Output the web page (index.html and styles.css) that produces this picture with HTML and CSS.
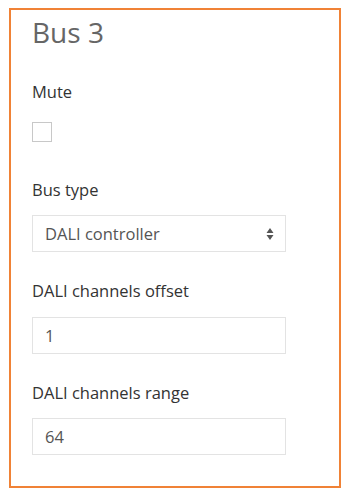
FILE: index.html
```html
<!DOCTYPE html>
<html>
<head>
<meta charset="utf-8">
<link rel="stylesheet" href="styles.css">
</head>
<body>
<div class="panel">
  <h1 class="title">Bus 3</h1>
  <div class="field f-mute">
    <div class="label">Mute</div>
    <div class="checkbox"></div>
  </div>
  <div class="field f-type">
    <div class="label">Bus type</div>
    <div class="control select c-type">
      <span>DALI controller</span>
      <svg class="arrows" width="8" height="14" viewBox="0 0 8 14"><path d="M4 1 L7.5 6 H0.5 Z M4 13 L7.5 8 H0.5 Z" fill="#555"/></svg>
    </div>
  </div>
  <div class="field f-offset">
    <div class="label">DALI channels offset</div>
    <div class="control c-offset">1</div>
  </div>
  <div class="field f-range">
    <div class="label">DALI channels range</div>
    <div class="control c-range">64</div>
  </div>
</div>
</body>
</html>
```
FILE: styles.css
```css
html, body {
  margin: 0;
  padding: 0;
  background: #ffffff;
}
body {
  font-family: "Open Sans", "Noto Sans", sans-serif;
  color: #333;
}
.panel {
  margin: 8px 0 0 9px;
  width: 332px;
  height: 480px;
  border: 2px solid #f08236;
  padding: 0 0 0 21px;
  box-sizing: border-box;
  display: flex;
  flex-direction: column;
}
.title {
  margin: 4px 0 0 0;
  font-size: 28px;
  font-weight: 400;
  line-height: 36px;
  color: #666;
}
.field {
  display: flex;
  flex-direction: column;
}
.label {
  font-size: 16.5px;
  line-height: 22px;
  color: #333;
}
.f-mute { margin-top: 31px; }
.f-type { margin-top: 37px; }
.f-offset { margin-top: 28px; }
.f-range { margin-top: 28px; }
.checkbox {
  margin-top: 19px;
  width: 18px;
  height: 18px;
  border: 1px solid #c8c8c8;
  background: #fff;
}
.control {
  width: 254px;
  height: 37px;
  box-sizing: border-box;
  border: 1px solid #e3e3e3;
  padding: 0 12px;
  display: flex;
  align-items: center;
  font-size: 16.5px;
  color: #555;
}
.c-type { margin-top: 14px; }
.c-offset { margin-top: 15px; }
.c-range { margin-top: 14px; }
.select {
  justify-content: space-between;
}
.arrows {
  margin-right: -1px;
}
```
